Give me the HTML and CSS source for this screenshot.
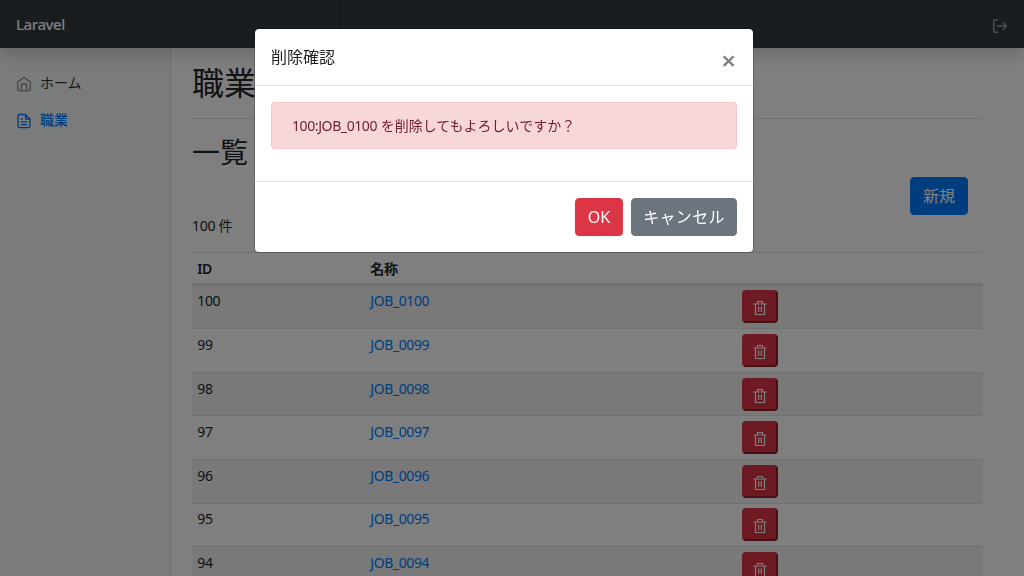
FILE: index.html
```html
<!DOCTYPE html>
<html lang="ja">
<head>
<meta charset="utf-8">
<title>Laravel</title>
<link rel="stylesheet" href="styles.css">
</head>
<body>
<svg class="sprite" aria-hidden="true">
  <symbol id="trash" viewBox="0 0 14 16"><path d="M.3 4h13.400M4.500 4V1.500h5V4M2.500 4v10.500h9V4M5.700 6.500v5.500M8.300 6.500v5.500" fill="none" stroke="currentColor" stroke-width="1.200"/></symbol>
</svg>
<header class="navbar">
  <a class="brand">Laravel</a>
  <a class="logout"><svg width="16" height="16" viewBox="0 0 16 16" fill="none" stroke="currentColor" stroke-width="1.500" stroke-linecap="round" stroke-linejoin="round"><path d="M5.500 1.700H3.200Q1.700 1.700 1.700 3.200v9.600q0 1.500 1.500 1.500h2.300M5.500 8h9M11 4.500 14.500 8 11 11.500"/></svg></a>
</header>
<div class="layout">
  <nav class="sidebar">
    <a class="nav-link"><svg class="nav-icon" viewBox="0 0 16 16" fill="none" stroke="currentColor" stroke-width="1.500" stroke-linejoin="round"><path d="M1.700 6.200 8 1.300l6.300 4.900v7q0 1.500-1.500 1.500H3.200q-1.500 0-1.500-1.500zM5.500 14.500V8h5v6.500"/></svg>ホーム</a>
    <a class="nav-link active"><svg class="nav-icon" viewBox="0 0 16 16" fill="none" stroke="currentColor" stroke-width="1.300" stroke-linejoin="round"><path d="M9.500 1.500H3.500Q2 1.500 2 3v10.200q0 1.500 1.500 1.500h9q1.500 0 1.500-1.500V6zV6H14M4.800 6h2M4.800 8.800h6.400M4.800 11.700h6.400"/></svg>職業</a>
  </nav>
  <main class="content">
    <div class="page-head"><h1>職業</h1></div>
    <h2>一覧</h2>
    <div class="actions"><button class="btn primary">新規</button></div>
    <div class="count">100 件</div>
    <table>
      <colgroup><col class="col-id"><col class="col-name"><col></colgroup>
      <thead><tr><th>ID</th><th>名称</th><th></th></tr></thead>
      <tbody>
        <tr><td>100</td><td><a>JOB_0100</a></td><td><button class="delete"><svg><use href="#trash"/></svg></button></td></tr>
        <tr><td>99</td><td><a>JOB_0099</a></td><td><button class="delete"><svg><use href="#trash"/></svg></button></td></tr>
        <tr><td>98</td><td><a>JOB_0098</a></td><td><button class="delete"><svg><use href="#trash"/></svg></button></td></tr>
        <tr><td>97</td><td><a>JOB_0097</a></td><td><button class="delete"><svg><use href="#trash"/></svg></button></td></tr>
        <tr><td>96</td><td><a>JOB_0096</a></td><td><button class="delete"><svg><use href="#trash"/></svg></button></td></tr>
        <tr><td>95</td><td><a>JOB_0095</a></td><td><button class="delete"><svg><use href="#trash"/></svg></button></td></tr>
        <tr><td>94</td><td><a>JOB_0094</a></td><td><button class="delete"><svg><use href="#trash"/></svg></button></td></tr>
      </tbody>
    </table>
  </main>
</div>
<div class="backdrop">
  <section class="modal" role="dialog">
    <div class="modal-header"><h5>削除確認</h5><button class="close">×</button></div>
    <div class="modal-body"><div class="alert"><span class="job">100:JOB_0100</span> を削除してもよろしいですか？</div></div>
    <div class="modal-footer"><button class="btn danger">OK</button><button class="btn secondary">キャンセル</button></div>
  </section>
</div>
</body>
</html>
```
FILE: styles.css
```css
* { box-sizing: border-box; }
body {
  margin: 0;
  height: 576px;
  overflow: hidden;
  font: 14px/21px "Noto Sans", "Noto Sans CJK JP", sans-serif;
  color: #212529;
  background: #fff;
}
button { font-family: inherit; margin: 0; }
h1, h2, h5 { margin: 0; }
.sprite { display: none; }
.navbar {
  position: relative;
  z-index: 1;
  display: flex;
  justify-content: space-between;
  height: 48px;
  background: #343a40;
  box-shadow: 0 8px 16px rgba(0, 0, 0, .15);
}
.brand {
  width: 341.300px;
  padding: 12px 16px;
  font-size: 15px;
  font-weight: 500;
  line-height: 24px;
  letter-spacing: -.4px;
  color: #fff;
  box-shadow: inset -1px 0 0 rgba(0, 0, 0, .25);
}
.logout { padding: 18px 16px 0 0; color: #9a9da0; }
.logout svg { display: block; }
.layout { display: flex; height: 528px; }
.sidebar {
  flex: 0 0 170.660px;
  padding-top: 16px;
  background: #f4f9f7;
  box-shadow: inset -1px 0 0 rgba(0, 0, 0, .1);
}
.nav-link {
  display: flex;
  align-items: center;
  height: 37px;
  padding: 0 16px;
  gap: 8px;
  color: #333;
}
.nav-link.active { color: #007bff; font-weight: 500; }
.nav-icon { width: 16px; height: 16px; color: #999; margin-top: 2px; }
.active .nav-icon { color: #007bff; }
.content { flex: 1; padding: 16px 41px 0 21.340px; }
.page-head { height: 55px; border-bottom: 1px solid #dee2e6; }
h1 { font-size: 32px; font-weight: 400; line-height: 38px; }
h2 { margin-top: 16px; font-size: 28px; font-weight: 400; line-height: 34px; }
.actions { display: flex; justify-content: flex-end; padding: 8px 15px 0; }
.btn {
  height: 38px;
  padding: 0 12px;
  border: 1px solid;
  border-radius: 4px;
  font-size: 16px;
  line-height: 24px;
  color: #fff;
}
.primary { background: #007bff; border-color: #007bff; }
.danger { background: #dc3545; border-color: #dc3545; width: 48px; padding: 0; }
.secondary { background: #6c757d; border-color: #6c757d; width: 106px; padding: 0; letter-spacing: .3px; }
.count { height: 37px; letter-spacing: -.3px; }
table { width: 791px; border-collapse: separate; border-spacing: 0; table-layout: fixed; }
.col-id { width: 173px; }
.col-name { width: 372px; }
th, td {
  padding: 4.800px;
  border-top: 1px solid #dee2e6;
  text-align: left;
  vertical-align: top;
  letter-spacing: -.4px;
}
th:not(:last-child), td:not(:last-child) { padding-left: 5.300px; }
th { height: 32.600px; padding-bottom: 3.800px; border-bottom: 2px solid #dee2e6; font-size: 14px; font-weight: 600; }
td { height: 43.600px; }
tbody tr:nth-child(odd) { background: rgba(0, 0, 0, .05); }
td a { color: #007bff; }
.delete {
  display: block;
  width: 36px;
  height: 33px;
  padding: 3px 0 0 9px;
  border: 2px outset #dc3545;
  border-radius: 4px;
  background: #dc3545;
  color: #fff;
}
.delete svg { display: block; width: 14px; height: 16px; }
.backdrop {
  position: fixed;
  inset: 0;
  z-index: 2;
  display: flex;
  align-items: flex-start;
  padding: 28px 0 0 254px;
  background: rgba(0, 0, 0, .5);
}
.modal {
  width: 500px;
  background: #fff;
  background-clip: padding-box;
  border: 1px solid rgba(0, 0, 0, .2);
  border-radius: 5px;
}
.modal-header {
  display: flex;
  justify-content: space-between;
  height: 57px;
  padding: 16px;
  border-bottom: 1px solid #dee2e6;
}
h5 { font-size: 16px; font-weight: 400; line-height: 24px; }
.close {
  padding: 3px 1px 0;
  border: 0;
  background: none;
  font-size: 26px;
  font-weight: 600;
  line-height: 24px;
  color: #000;
  opacity: .5;
}
.modal-body { padding: 16px 16px 32px; }
.alert {
  height: 47px;
  padding: 12px 20px;
  border: 1px solid #f5c6cb;
  border-radius: 4px;
  background: #f8d7da;
  color: #721c24;
}
.job { letter-spacing: -.4px; }
.modal-footer {
  display: flex;
  justify-content: flex-end;
  gap: 8px;
  padding: 16px;
  border-top: 1px solid #dee2e6;
}
```
